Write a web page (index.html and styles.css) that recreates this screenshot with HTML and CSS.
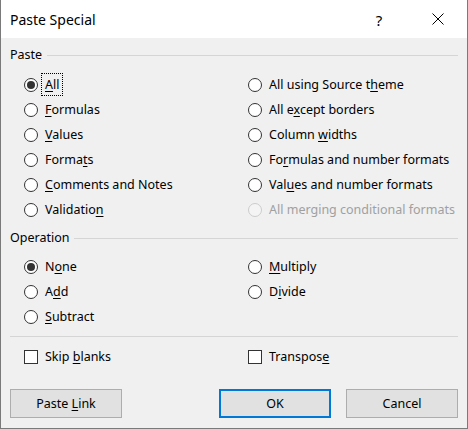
FILE: index.html
```html
<!DOCTYPE html>
<html>
<head>
<meta charset="utf-8">
<link rel="stylesheet" href="styles.css">
</head>
<body>
<div class="dialog">
  <div class="titlebar">
    <span class="title">Paste Special</span>
    <span class="help">?</span>
    <span class="close">
      <svg width="12" height="12" viewBox="0 0 12 12"><path d="M0.5 0.5 L11.5 11.5 M11.5 0.5 L0.5 11.5" stroke="#000" stroke-width="1" fill="none"/></svg>
    </span>
  </div>
  <div class="body">
    <div class="legend legend-paste"><span>Paste</span><i class="rule"></i></div>
    <div class="grid grid-paste">
      <div class="opt"><span class="radio checked"></span><span class="label focus"><u>A</u>ll</span></div>
      <div class="opt"><span class="radio"></span><span class="label">All using Source t<u>h</u>eme</span></div>
      <div class="opt"><span class="radio"></span><span class="label"><u>F</u>ormulas</span></div>
      <div class="opt"><span class="radio"></span><span class="label">All e<u>x</u>cept borders</span></div>
      <div class="opt"><span class="radio"></span><span class="label"><u>V</u>alues</span></div>
      <div class="opt"><span class="radio"></span><span class="label">Column <u>w</u>idths</span></div>
      <div class="opt"><span class="radio"></span><span class="label">Forma<u>t</u>s</span></div>
      <div class="opt"><span class="radio"></span><span class="label">Fo<u>r</u>mulas and number formats</span></div>
      <div class="opt"><span class="radio"></span><span class="label"><u>C</u>omments and Notes</span></div>
      <div class="opt"><span class="radio"></span><span class="label">Val<u>u</u>es and number formats</span></div>
      <div class="opt"><span class="radio"></span><span class="label">Validatio<u>n</u></span></div>
      <div class="opt disabled"><span class="radio"></span><span class="label">All merging conditional formats</span></div>
    </div>
    <div class="legend legend-op"><span>Operation</span><i class="rule"></i></div>
    <div class="grid grid-op">
      <div class="opt"><span class="radio checked"></span><span class="label">N<u>o</u>ne</span></div>
      <div class="opt"><span class="radio"></span><span class="label"><u>M</u>ultiply</span></div>
      <div class="opt"><span class="radio"></span><span class="label">A<u>d</u>d</span></div>
      <div class="opt"><span class="radio"></span><span class="label">D<u>i</u>vide</span></div>
      <div class="opt"><span class="radio"></span><span class="label"><u>S</u>ubtract</span></div>
    </div>
    <div class="separator"></div>
    <div class="grid grid-check">
      <div class="opt"><span class="check"></span><span class="label">Skip <u>b</u>lanks</span></div>
      <div class="opt"><span class="check"></span><span class="label">Transpos<u>e</u></span></div>
    </div>
    <div class="buttons">
      <button class="btn">Paste <u>L</u>ink</button>
      <button class="btn btn-default">OK</button>
      <button class="btn">Cancel</button>
    </div>
  </div>
</div>
</body>
</html>
```
FILE: styles.css
```css
html, body {
  margin: 0;
  padding: 0;
  background: #f0f0f0;
}
body {
  font-family: "Noto Sans", "Open Sans", "DejaVu Sans", sans-serif;
  font-size: 12.5px;
  color: #000;
}
.dialog {
  width: 468px;
  height: 429px;
  box-sizing: border-box;
  border: 1px solid #7a7a7a;
  border-top: none;
  background: #f0f0f0;
  display: flex;
  flex-direction: column;
}
.titlebar {
  height: 38px;
  background: #fff;
  display: flex;
  align-items: center;
  padding-left: 9px;
  flex-shrink: 0;
}
.title {
  font-size: 14px;
  flex: 1;
  padding-top: 1px;
}
.help {
  font-size: 15px;
  width: 20px;
  margin-right: 43px;
  text-align: center;
  padding-top: 1px;
}
.close {
  width: 12px;
  height: 12px;
  margin-right: 23px;
  display: flex;
}
.body {
  padding: 0 9px 0 9px;
  display: flex;
  flex-direction: column;
}
.legend {
  display: flex;
  align-items: center;
  height: 16px;
  line-height: 16px;
}
.legend .rule {
  flex: 1;
  height: 1px;
  background: #d5d5d5;
  margin-left: 5px;
}
.legend-paste { margin-top: 9px; }
.legend-op { margin-top: 8px; }
.grid {
  display: grid;
  grid-template-columns: 224px 1fr;
  grid-auto-rows: 25px;
  padding-left: 14px;
}
.grid-paste { margin-top: 9px; }
.grid-op { margin-top: 8px; }
.grid-check { margin-top: 7px; }
.opt {
  display: flex;
  align-items: center;
  white-space: nowrap;
}
.radio {
  width: 14px;
  height: 14px;
  box-sizing: border-box;
  border: 1px solid #333;
  border-radius: 50%;
  background: #fff;
  margin-right: 7px;
  flex-shrink: 0;
  display: flex;
  align-items: center;
  justify-content: center;
}
.radio.checked::after {
  content: "";
  width: 8px;
  height: 8px;
  border-radius: 50%;
  background: #333;
}
.check {
  width: 14px;
  height: 14px;
  box-sizing: border-box;
  border: 1px solid #333;
  background: #fff;
  margin-right: 7px;
  flex-shrink: 0;
}
.label u {
  text-decoration: underline;
  text-underline-offset: 2px;
}
.focus {
  outline: 1px dotted #000;
  outline-offset: 2px;
  padding: 0 1px;
  margin-left: -1px;
}
.disabled .radio {
  border-color: #cccccc;
  background: #f4f4f4;
}
.disabled .label {
  color: #a0a0a0;
}
.separator {
  height: 1px;
  background: #d5d5d5;
  margin-top: 7px;
}
.buttons {
  display: flex;
  gap: 15px;
  margin-top: 20px;
}
.btn {
  width: 112px;
  height: 29px;
  box-sizing: border-box;
  border: 1px solid #adadad;
  background: #e1e1e1;
  font-family: inherit;
  font-size: 12.5px;
  color: #000;
  padding: 0;
}
.btn u { text-underline-offset: 2px; }
.btn-default {
  border: 2px solid #0078d7;
  margin-left: auto;
}
```
